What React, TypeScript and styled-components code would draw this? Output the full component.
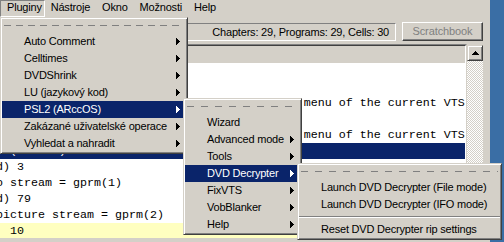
import React from 'react';
import styled, { createGlobalStyle } from 'styled-components';

const GlobalStyle = createGlobalStyle`
  html, body {
    margin: 0;
    padding: 0;
    background: #d4d0c8;
  }
  body {
    font-family: 'Liberation Sans', Arial, sans-serif;
    font-size: 11px;
    color: #000;
  }
`;

const Screen = styled.div`
  position: relative;
  display: flex;
  width: 504px;
  height: 242px;
  overflow: hidden;
  background: #d4d0c8;
`;

const Window = styled.div`
  flex: 1;
  min-width: 0;
  display: flex;
  flex-direction: column;
  padding: 0 7px 4px 0;
`;

const Desktop = styled.div`
  width: 14px;
  background: #3a6ea5;
`;

const MenuBar = styled.div`
  display: flex;
  height: 17px;
`;

const MenuBarItem = styled.div<{ $active?: boolean }>`
  height: 17px;
  box-sizing: border-box;
  padding: ${(p) => (p.$active ? '0 2px 0 6px' : '0 5px')};
  line-height: 13px;
  letter-spacing: -0.2px;
  border: 1px solid transparent;
  ${(p) => p.$active && 'border-color: #808080 #fff #fff #808080;'}
`;

const ToolBar = styled.div`
  height: 27px;
  display: flex;
  align-items: flex-start;
  gap: 6px;
  padding-left: 120px;
`;

const InfoBox = styled.div`
  flex: 1;
  margin-top: 6px;
  height: 18px;
  box-sizing: border-box;
  border: 1px solid;
  border-color: #808080 #fff #fff #808080;
  padding-right: 6px;
  text-align: right;
  line-height: 16px;
  letter-spacing: -0.2px;
  white-space: nowrap;
`;

const ToolButton = styled.div`
  width: 81px;
  height: 19px;
  margin-top: 5px;
  box-sizing: border-box;
  border: 1px solid;
  border-color: #fff #404040 #404040 #fff;
  box-shadow: inset -1px -1px #808080;
  color: #808080;
  text-align: center;
  line-height: 17px;
  letter-spacing: -0.1px;
`;

const Body = styled.div`
  flex: 1;
  min-height: 0;
  display: flex;
`;

const Frame = styled.div`
  flex: 1;
  min-width: 0;
  display: flex;
  flex-direction: column;
  border-top: 1px solid #808080;
  border-right: 1px solid #d4d0c8;
`;

const FrameInner = styled.div`
  flex: 1;
  overflow: hidden;
  background: #fff;
  border-top: 1px solid #404040;
  border-right: 1px solid #fff;
`;

const HeaderBand = styled.div`
  height: 17px;
  background: #d4d0c8;
`;

const Line = styled.div<{ $tone?: 'selected' | 'marked' }>`
  height: 16px;
  box-sizing: border-box;
  padding-top: 1px;
  line-height: 15px;
  white-space: pre;
  text-indent: -4px;
  font-family: 'Liberation Mono', 'Courier New', monospace;
  font-size: 11.667px;
  background: ${(p) =>
    p.$tone === 'selected' ? '#0a246a' : p.$tone === 'marked' ? '#ffffc0' : 'transparent'};
  color: ${(p) => (p.$tone === 'selected' ? '#fff' : '#000')};
`;

const ScrollBar = styled.div`
  width: 16px;
  margin-top: 1px;
  display: flex;
  flex-direction: column;
`;

const ScrollButton = styled.div`
  height: 16px;
  box-sizing: border-box;
  background: #d4d0c8;
  border: 1px solid;
  border-color: #d4d0c8 #404040 #404040 #d4d0c8;
  box-shadow: inset 1px 1px #fff, inset -1px -1px #808080;
  display: flex;
  align-items: center;
  justify-content: center;
`;

const ScrollTrack = styled.div`
  flex: 1;
  background-image: conic-gradient(#fff 25%, #d4d0c8 0 50%, #fff 0 75%, #d4d0c8 0);
  background-size: 2px 2px;
`;

const MenuPanel = styled.div<{ $x: number; $y: number; $w: number }>`
  position: absolute;
  left: ${(p) => p.$x}px;
  top: ${(p) => p.$y}px;
  width: ${(p) => p.$w}px;
  box-sizing: border-box;
  padding: 1px;
  background: #d4d0c8;
  border: 1px solid;
  border-color: #d4d0c8 #404040 #404040 #d4d0c8;
  box-shadow: inset 1px 1px #fff, inset -1px -1px #808080;
`;

const Tearoff = styled.div<{ $period: number }>`
  height: 14px;
  box-sizing: border-box;
  padding: 6px 2px 0;
  display: flex;
  align-items: flex-start;
  &::before {
    content: '';
    flex: 1;
    height: 1px;
    background: repeating-linear-gradient(
      90deg,
      #808080 0 7px,
      transparent 7px ${(p) => p.$period}px
    );
  }
`;

const MenuItem = styled.div<{ $active?: boolean }>`
  height: 17px;
  display: flex;
  align-items: center;
  justify-content: space-between;
  padding: 0 6px 0 22px;
  line-height: 17px;
  letter-spacing: -0.2px;
  white-space: nowrap;
  background: ${(p) => (p.$active ? '#0a246a' : 'transparent')};
  color: ${(p) => (p.$active ? '#fff' : '#000')};
`;

const Separator = styled.div`
  height: 8px;
  box-sizing: border-box;
  padding-top: 3px;
  &::before {
    content: '';
    display: block;
    height: 1px;
    background: #808080;
    box-shadow: 0 1px #fff;
  }
`;

const Arrow = () => (
  <svg width="4" height="7" viewBox="0 0 4 7" shapeRendering="crispEdges">
    <rect x="0" y="0" width="1" height="7" fill="currentColor" />
    <rect x="1" y="1" width="1" height="5" fill="currentColor" />
    <rect x="2" y="2" width="1" height="3" fill="currentColor" />
    <rect x="3" y="3" width="1" height="1" fill="currentColor" />
  </svg>
);

const UpArrow = () => (
  <svg width="7" height="4" viewBox="0 0 7 4" shapeRendering="crispEdges">
    <rect x="3" y="0" width="1" height="1" fill="#000" />
    <rect x="2" y="1" width="3" height="1" fill="#000" />
    <rect x="1" y="2" width="5" height="1" fill="#000" />
    <rect x="0" y="3" width="7" height="1" fill="#000" />
  </svg>
);

type Entry = { label: string; sub?: boolean; active?: boolean } | 'separator';

const menuBar = ['Pluginy', 'Nástroje', 'Okno', 'Možnosti', 'Help'];

const pluginMenu: Entry[] = [
  { label: 'Auto Comment', sub: true },
  { label: 'Celltimes', sub: true },
  { label: 'DVDShrink', sub: true },
  { label: 'LU (jazykový kod)', sub: true },
  { label: 'PSL2 (ARccOS)', sub: true, active: true },
  { label: 'Zakázané uživatelské operace', sub: true },
  { label: 'Vyhledat a nahradit', sub: true },
];

const psl2Menu: Entry[] = [
  { label: 'Wizard' },
  { label: 'Advanced mode', sub: true },
  { label: 'Tools', sub: true },
  { label: 'DVD Decrypter', sub: true, active: true },
  { label: 'FixVTS', sub: true },
  { label: 'VobBlanker', sub: true },
  { label: 'Help', sub: true },
];

const decrypterMenu: Entry[] = [
  { label: 'Launch DVD Decrypter (File mode)' },
  { label: 'Launch DVD Decrypter (IFO mode)' },
  'separator',
  { label: 'Reset DVD Decrypter rip settings' },
];

// lines as seen through the horizontally scrolled command view
const lines: { text: string; tone?: 'selected' | 'marked' }[] = [
  { text: '  1 Pre commands' },
  { text: '' },
  { text: `${'  2 (JumpSS) Jump to the Root'.padEnd(44)}menu of the current VTS` },
  { text: '  3 (LinkTailPGC) Link to end of PGC' },
  { text: `${'  4 (CallSS) Call the Title'.padEnd(44)}menu of the current VTS` },
  { text: '  (SetSTN) Set Audio stream = 1', tone: 'selected' },
  { text: 'd) 3' },
  { text: 'o stream = gprm(1)' },
  { text: 'd) 79' },
  { text: 'picture stream = gprm(2)' },
  { text: '  10', tone: 'marked' },
];

const Menu: React.FC<{ x: number; y: number; w: number; period: number; entries: Entry[] }> = ({
  x,
  y,
  w,
  period,
  entries,
}) => (
  <MenuPanel $x={x} $y={y} $w={w}>
    <Tearoff $period={period} />
    {entries.map((entry, i) =>
      entry === 'separator' ? (
        <Separator key={i} />
      ) : (
        <MenuItem key={i} $active={entry.active}>
          <span>{entry.label}</span>
          {entry.sub && <Arrow />}
        </MenuItem>
      ),
    )}
  </MenuPanel>
);

export default function App() {
  return (
    <>
      <GlobalStyle />
      <Screen>
        <Window>
          <MenuBar>
            {menuBar.map((name, i) => (
              <MenuBarItem key={name} $active={i === 0}>
                {name}
              </MenuBarItem>
            ))}
          </MenuBar>
          <ToolBar>
            <InfoBox>Chapters: 29, Programs: 29, Cells: 30</InfoBox>
            <ToolButton>Scratchbook</ToolButton>
          </ToolBar>
          <Body>
            <Frame>
              <FrameInner>
                <HeaderBand />
                {lines.map((line, i) => (
                  <Line key={i} $tone={line.tone}>
                    {line.text}
                  </Line>
                ))}
              </FrameInner>
            </Frame>
            <ScrollBar>
              <ScrollButton>
                <UpArrow />
              </ScrollButton>
              <ScrollTrack />
            </ScrollBar>
          </Body>
        </Window>
        <Desktop />

        <Menu x={0} y={17} w={188} period={12} entries={pluginMenu} />
        <Menu x={183} y={98} w={119} period={14} entries={psl2Menu} />
        <Menu x={297} y={163} w={205} period={14} entries={decrypterMenu} />
      </Screen>
    </>
  );
}
